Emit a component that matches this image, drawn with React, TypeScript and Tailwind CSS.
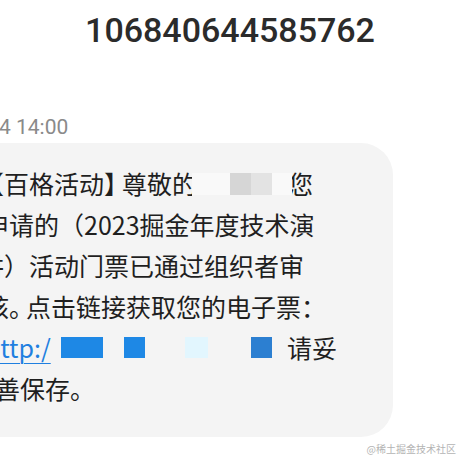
const cjk = { fontFamily: "'Noto Sans CJK SC', 'Noto Sans', sans-serif" };
const roboto = { fontFamily: "Roboto, 'Noto Sans', sans-serif" };

const Clip = ({ w, shift = 0, children }: { w: number; shift?: number; children: React.ReactNode }) => (
  <span className="inline-block overflow-hidden align-top" style={{ width: w }}>
    <span className="inline-block" style={{ marginLeft: -shift }}>
      {children}
    </span>
  </span>
);

export default function App() {
  return (
    <div className="w-[460px] h-[460px] bg-white overflow-hidden flex flex-col">
      {/* Sender */}
      <div
        className="pt-[10px] h-[50px] text-center text-[34px] leading-[40px] font-medium text-[#2b2b2b]"
        style={roboto}
      >
        106840644585762
      </div>

      {/* Timestamp */}
      <div className="mt-[65px] -ml-[1px] text-[21px] leading-[24px] text-[#8a8a8a]" style={roboto}>
        4 14:00
      </div>

      {/* Message bubble */}
      <div
        className="mt-[4px] -ml-[40px] w-[433px] bg-[#f4f4f4] rounded-[32px] pt-[20px] pb-[28px] text-[25px] leading-[41px] text-[#1f1f1f] whitespace-nowrap"
        style={cjk}
      >
        <div className="ml-[19px] flex items-center h-[41px]">
          <span>【百格活动</span>
          <span className="w-[18px] overflow-hidden" style={{ fontFeatureSettings: "'halt'" }}>】</span>
          <span>尊敬</span>
          <Clip w={20}>的</Clip>
          <span className="w-[38px] h-[22px] bg-[#f9f9f9]" />
          <span className="w-[21px] h-[22px] bg-[#d6d6d6]" />
          <span className="w-[21px] h-[22px] bg-[#e3e3e3]" />
          <span className="w-[20px] h-[22px] bg-[#f9f9f9]" />
          <Clip w={22} shift={4}>您</Clip>
        </div>
        <div className="ml-[24px] h-[41px]">申请的（2023掘金年度技术演</div>
        <div className="ml-[19px] h-[41px]">讲）活动门票已通过组织者审</div>
        <div className="ml-[24px] flex items-center h-[41px]">
          <span>核</span>
          <span className="w-[17px] overflow-hidden text-center">。</span>
          <span>点击链接获取您的电子票：</span>
        </div>
        <div className="ml-[25px] flex items-center h-[41px]">
          <span className="w-[76px] text-[#1f7fe0] underline decoration-1 underline-offset-[5px]">http:/</span>
          <span className="w-[42px] h-[21px] bg-[#1e88e5]" />
          <span className="ml-[21px] w-[21px] h-[21px] bg-[#1e88e5]" />
          <span className="ml-[40px] w-[23px] h-[21px] bg-[#e2f6fe]" />
          <span className="ml-[43px] w-[21px] h-[21px] bg-[#2c7fd1]" />
          <span className="ml-[15px]">请妥</span>
        </div>
        <div className="ml-[35px] h-[41px]">善保存。</div>
      </div>

      {/* Watermark */}
      <div className="mt-[5px] pr-[4px] text-right text-[10px] leading-[14px] text-[#b4b4b4]" style={cjk}>
        @稀土掘金技术社区
      </div>
    </div>
  );
}
